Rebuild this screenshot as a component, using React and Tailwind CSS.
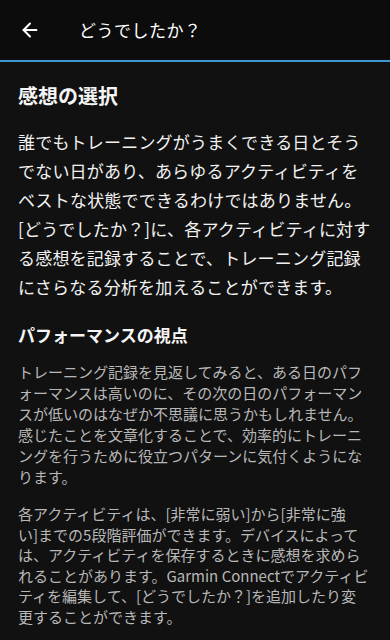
import React from 'react';
import { ArrowLeft } from 'lucide-react';

const font = { fontFamily: '"Noto Sans CJK JP", "Noto Sans", sans-serif' };

const Lines = ({ lines }) =>
  lines.map((l, i) => (
    <span key={i} className="block whitespace-nowrap">
      {l}
    </span>
  ));

const App = () => {
  return (
    <div className="min-h-[640px] bg-[#111111] text-white" style={font}>
      <header className="h-[62px] bg-[#0c0c0c] border-b-2 border-[#3b9ad6] flex items-center">
        <button className="w-[60px] h-full flex items-center justify-center text-white">
          <ArrowLeft size={22} strokeWidth={2.2} />
        </button>
        <h1 className="ml-[19px] text-[17px] font-normal tracking-[0.5px]">どうでしたか？</h1>
      </header>

      <main className="px-[18px] pt-[20px] pb-6">
        <h2 className="text-[20px] leading-[28px] font-bold text-[#f5f5f5]">感想の選択</h2>
        <p className="mt-[17px] text-[17px] leading-[29px] text-[#f2f2f2] tracking-[0.2px]">
          <Lines
            lines={[
              '誰でもトレーニングがうまくできる日とそう',
              'でない日があり、あらゆるアクティビティを',
              'ベストな状態でできるわけではありません。',
              '[どうでしたか？]に、各アクティビティに対す',
              'る感想を記録することで、トレーニング記録',
              'にさらなる分析を加えることができます。',
            ]}
          />
        </p>

        <h3 className="mt-[22px] text-[17px] leading-[24px] font-bold text-[#f5f5f5]">パフォーマンスの視点</h3>
        <p className="mt-[14px] text-[15px] leading-[21px] text-[#b8b8b8]">
          <Lines
            lines={[
              'トレーニング記録を見返してみると、ある日のパフ',
              'ォーマンスは高いのに、その次の日のパフォーマン',
              'スが低いのはなぜか不思議に思うかもしれません。',
              '感じたことを文章化することで、効率的にトレーニ',
              'ングを行うために役立つパターンに気付くようにな',
              'ります。',
            ]}
          />
        </p>
        <p className="mt-[17px] text-[15px] leading-[20.5px] text-[#b8b8b8]">
          <Lines
            lines={[
              '各アクティビティは、[非常に弱い]から[非常に強',
              'い]までの5段階評価ができます。デバイスによって',
              'は、アクティビティを保存するときに感想を求めら',
              'れることがあります。Garmin Connectでアクティビ',
              'ティを編集して、[どうでしたか？]を追加したり変',
              '更することができます。',
            ]}
          />
        </p>
      </main>
    </div>
  );
};

export default App;
